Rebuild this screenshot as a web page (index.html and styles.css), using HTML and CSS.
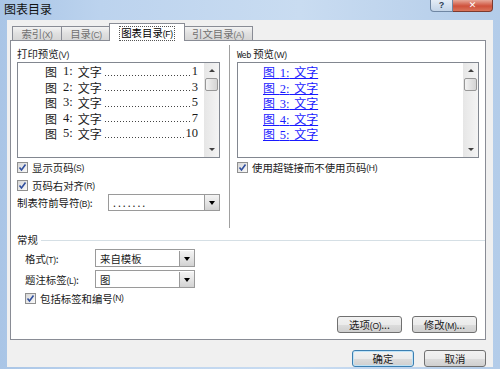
FILE: index.html
```html
<!DOCTYPE html>
<html>
	<head>
		<meta charset="utf-8">
		<title>图表目录</title>
		<link rel="stylesheet" href="styles.css">
	</head>
	<body>
		<div class="window">
			<div class="titlebar">
				<span class="title">图表目录</span>
				<div class="caption-btns">
					<span class="help">?</span>
					<span class="close">✕</span>
				</div>
			</div>
			<div class="client">
				<div class="tabs">
					<span class="tab t1">索引<i>(X)</i></span>
					<span class="tab t2">目录<i>(C)</i></span>
					<span class="tab t3 active"><span class="focus">图表目录<i>(F)</i></span></span>
					<span class="tab t4">引文目录<i>(A)</i></span>
				</div>
				<div class="panel">
					<div class="top">
						<div class="col left">
							<div class="label">打印预览<i>(V)</i></div>
							<div class="listbox">
								<div class="items print">
									<div class="row"><span class="fig">图</span><span class="num">1:</span><span class="txt">文字</span><span class="leader"></span><span class="page">1</span></div>
									<div class="row"><span class="fig">图</span><span class="num">2:</span><span class="txt">文字</span><span class="leader"></span><span class="page">3</span></div>
									<div class="row"><span class="fig">图</span><span class="num">3:</span><span class="txt">文字</span><span class="leader"></span><span class="page">5</span></div>
									<div class="row"><span class="fig">图</span><span class="num">4:</span><span class="txt">文字</span><span class="leader"></span><span class="page">7</span></div>
									<div class="row"><span class="fig">图</span><span class="num">5:</span><span class="txt">文字</span><span class="leader"></span><span class="page">10</span></div>
								</div>
								<div class="scrollbar">
									<span class="arrow up"></span>
									<span class="thumb"></span>
									<span class="arrow down"></span>
								</div>
							</div>
							<div class="check"><span class="box"></span>显示页码<i>(S)</i></div>
							<div class="check"><span class="box"></span>页码右对齐<i>(R)</i></div>
							<div class="field">
								<span class="field-label">制表符前导符<i>(B)</i>:</span>
								<div class="combo leader-combo"><span class="value">.......</span><span class="drop"></span></div>
							</div>
						</div>
						<div class="vsep"></div>
						<div class="col right">
							<div class="label"><b class="web">Web</b> 预览<i>(W)</i></div>
							<div class="listbox">
								<div class="items web-items">
									<div class="row"><a>图 <span class="num">1:</span> 文字</a></div>
									<div class="row"><a>图 <span class="num">2:</span> 文字</a></div>
									<div class="row"><a>图 <span class="num">3:</span> 文字</a></div>
									<div class="row"><a>图 <span class="num">4:</span> 文字</a></div>
									<div class="row"><a>图 <span class="num">5:</span> 文字</a></div>
								</div>
								<div class="scrollbar">
									<span class="arrow up"></span>
									<span class="thumb"></span>
									<span class="arrow down"></span>
								</div>
							</div>
							<div class="check"><span class="box"></span>使用超链接而不使用页码<i>(H)</i></div>
						</div>
					</div>
					<div class="group">常规</div>
					<div class="form">
						<span class="form-label">格式<i>(T)</i>:</span>
						<div class="combo"><span class="value">来自模板</span><span class="drop"></span></div>
						<span class="form-label">题注标签<i>(L)</i>:</span>
						<div class="combo"><span class="value">图</span><span class="drop"></span></div>
						<div class="check wide"><span class="box"></span>包括标签和编号<i>(N)</i></div>
					</div>
					<div class="panel-btns">
						<span class="btn">选项<i>(O)</i>...</span>
						<span class="btn">修改<i>(M)</i>...</span>
					</div>
				</div>
				<div class="dialog-btns">
					<span class="btn default">确定</span>
					<span class="btn">取消</span>
				</div>
			</div>
		</div>
	</body>
</html>
```

FILE: styles.css
```css
body{
	margin:0;
	width:500px;height:369px;
	overflow:hidden;
	font-family:"Noto Sans CJK SC","Liberation Sans",sans-serif;
	font-size:10.4px;
	color:#1a1a1a;
}
i{
	font-style:normal;
	font-family:"Liberation Sans",sans-serif;
	font-size:8.5px;
	letter-spacing:-0.3px;
}
.window{
	height:369px;
	display:flex;
	flex-direction:column;
	background:linear-gradient(to right,#a9c5e6,#bcd3ee 20%,#c9dcf1 60%,#b3cce9);
}
.titlebar{
	height:20px;
	display:flex;
	justify-content:space-between;
	align-items:flex-start;
}
.title{
	font-size:12px;
	line-height:12px;
	padding:3px 0 0 4px;
	color:#111;
}
.caption-btns{display:flex;margin-right:7px;}
.help{
	width:21px;height:11px;
	border:1px solid #6f86a3;border-top:0;
	border-radius:0 0 0 4px;
	background:linear-gradient(#e4ecf6,#c3d4e8);
	font:bold 9px/10px "Liberation Sans",sans-serif;
	text-align:center;color:#2d3e55;
}
.close{
	width:39px;height:11px;
	border:1px solid #7c3a2f;border-top:0;border-left:0;
	border-radius:0 0 4px 0;
	background:linear-gradient(#e7a999,#cf513b 55%,#d9745a);
	font:bold 9px/10px "DejaVu Sans",sans-serif;
	text-align:center;color:#fff;
}
.client{
	flex:1;
	margin:0 7px 2px;
	padding:3px 7px 0 3px;
	background:#f0f0f0;
	display:flex;
	flex-direction:column;
}

/* tabs */
.tabs{
	height:17px;
	display:flex;
	align-items:flex-end;
	padding-left:2px;
	position:relative;
	z-index:1;
}
.tab{
	height:13px;
	line-height:13px;
	border:1px solid #898c95;border-bottom:0;
	background:linear-gradient(#f3f3f3,#e0e0e0 50%,#d6d6d6);
	color:#707070;
	text-align:center;
	box-sizing:content-box;
}
.t1{width:48px;}
.t2{width:48px;margin-left:-1px;}
.t3{width:74px;margin-left:-2px;}
.t4{width:68px;margin-left:-2px;}
.tab.active{
	height:17px;
	line-height:17px;
	margin-bottom:-1px;
	background:#fff;
	color:#000;
	position:relative;
}
.focus{
	border:1px dotted #555;
	padding:0 1px;
	line-height:12px;
	display:inline-block;
}
.panel{
	height:293px;
	border:1px solid #898c95;
	background:#fff;
	padding:5px 0 0 6px;
	display:flex;
	flex-direction:column;
}
.top{
	height:182px;
	display:flex;
}
.col.left{width:203px;}
.col.right{width:242px;}
.vsep{
	width:1px;
	background:#a0a0a0;
	border-right:1px solid #fff;
	margin:-1px 6px 0 9px;
}
.label{
	line-height:16px;
	height:16px;
}
.web{
	font:normal 8.5px "DejaVu Sans Mono",monospace;
	letter-spacing:-0.5px;
}

/* list boxes */
.listbox{
	height:94px;
	border:1px solid #828790;
	display:flex;
}
.items{flex:1;min-width:0;padding-top:1px;}
.row{
	height:15.5px;
	line-height:15.5px;
	display:flex;
	white-space:nowrap;
	font-size:12px;
}
.print .row{padding:0 6px 0 27px;}
.fig,.txt{font-family:"Noto Sans CJK SC",sans-serif;}
.num,.page{
	font-family:"Liberation Serif",serif;
	font-size:12.5px;
}
.print .num{margin:0 5px 0 6px;}
.leader{
	flex:1;
	height:1px;
	align-self:flex-end;
	margin:0 1px 4px 3px;
	background:linear-gradient(to right,#444 1px,transparent 1px) left top/3px 1px repeat-x;
}
.web-items .row{padding-left:25px;}
.web-items a{
	color:#1a1aff;
	text-decoration:underline;
	word-spacing:2px;
}
.scrollbar{
	width:15px;
	background:linear-gradient(to right,#e6e6e6,#f4f4f4);
	display:flex;
	flex-direction:column;
	align-items:center;
}
.arrow{
	width:0;height:0;
	border-left:3px solid transparent;
	border-right:3px solid transparent;
}
.arrow.up{
	border-bottom:3px solid #404040;
	margin-top:6px;
}
.arrow.down{
	border-top:3px solid #404040;
	margin-top:auto;
	margin-bottom:6px;
}
.thumb{
	width:11px;height:11px;
	margin-top:6px;
	border:1px solid #979797;
	border-radius:2px;
	background:linear-gradient(to right,#f3f3f3,#e2e2e2 50%,#d4d4d4);
}

/* checkboxes and fields */
.check{
	height:17px;
	display:flex;
	align-items:center;
	margin-top:1px;
}
.box{
	width:11px;height:11px;
	border:1px solid #8f8f8f;
	box-sizing:border-box;
	margin-right:4px;
	background:
		url("data:image/svg+xml,%3Csvg xmlns='http://www.w3.org/2000/svg' width='9' height='9'%3E%3Cpath d='M1.5 4.5 L3.5 7 L7.5 1.5' fill='none' stroke='%23304f9e' stroke-width='1.6'/%3E%3C/svg%3E") center/9px 9px no-repeat,
		linear-gradient(135deg,#d6d6d6,#fafafa);
}
.field{
	height:17px;
	display:flex;
	align-items:center;
	justify-content:space-between;
}
.combo{
	height:17px;
	box-sizing:border-box;
	border:1px solid #9a9a9a;
	background:#fff;
	display:flex;
	align-items:center;
}
.leader-combo{width:112px;}
.value{flex:1;padding-left:4px;}
.leader-combo .value{letter-spacing:2px;}
.drop{
	width:15px;height:15px;
	box-sizing:border-box;
	border-left:1px solid #9a9a9a;
	background:linear-gradient(#f4f4f4,#e4e4e4 50%,#d2d2d2);
	position:relative;
}
.drop::after{
	content:"";
	position:absolute;
	left:4px;top:6px;
	border-left:3px solid transparent;
	border-right:3px solid transparent;
	border-top:4px solid #000;
}
.group{
	margin-top:5px;
	height:14px;
	line-height:14px;
	display:flex;
	align-items:center;
}
.group::after{
	content:"";
	flex:1;
	height:1px;
	margin-left:3px;
	background:#d5dfe5;
}
.form{
	display:grid;
	grid-template-columns:70px 100px;
	row-gap:3px;
	padding-left:8px;
	margin-top:2px;
	align-items:center;
}
.form .combo{height:18px;}
.check.wide{grid-column:1 / 3;margin-top:0;height:14px;}

/* buttons */
.panel-btns{
	margin-top:auto;
	margin-bottom:6px;
	display:flex;
	justify-content:flex-end;
	gap:10px;
	padding-right:8px;
}
.btn{
	width:65px;height:17px;
	box-sizing:border-box;
	border:1px solid #707070;
	border-radius:3px;
	background:linear-gradient(#f2f2f2,#ebebeb 50%,#dddddd 51%,#cfcfcf);
	text-align:center;
	line-height:15px;
}
.dialog-btns{
	margin-top:10px;
	display:flex;
	justify-content:flex-end;
	gap:10px;
}
.dialog-btns .btn{width:62px;}
.btn.default{
	border-color:#3c7fb1;
	box-shadow:inset 0 0 0 1px #bfe3f7;
}
```
